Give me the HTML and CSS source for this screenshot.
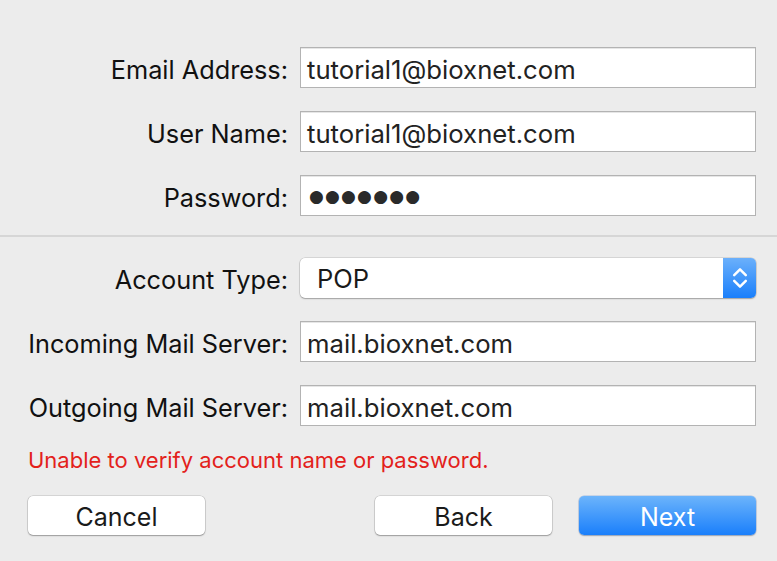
FILE: index.html
```html
<!DOCTYPE html>
<html>
<head>
<meta charset="utf-8">
<link rel="stylesheet" href="styles.css">
</head>
<body>
<div class="pane">
  <div class="section top">
    <div class="row">
      <label class="label">Email Address:</label>
      <div class="field">tutorial1@bioxnet.com</div>
    </div>
    <div class="row">
      <label class="label">User Name:</label>
      <div class="field">tutorial1@bioxnet.com</div>
    </div>
    <div class="row">
      <label class="label">Password:</label>
      <div class="field pw">●●●●●●●</div>
    </div>
  </div>
  <div class="separator"></div>
  <div class="section bottom">
    <div class="row">
      <label class="label">Account Type:</label>
      <div class="popup">
        <span class="popup-text">POP</span>
        <span class="stepper">
          <svg width="18" height="26" viewBox="0 0 18 26">
            <path d="M3.2 10.2 L9 4.4 L14.8 10.2" fill="none" stroke="#fff" stroke-width="2.5" stroke-linecap="round" stroke-linejoin="round"/>
            <path d="M3.2 15.8 L9 21.6 L14.8 15.8" fill="none" stroke="#fff" stroke-width="2.5" stroke-linecap="round" stroke-linejoin="round"/>
          </svg>
        </span>
      </div>
    </div>
    <div class="row">
      <label class="label">Incoming Mail Server:</label>
      <div class="field">mail.bioxnet.com</div>
    </div>
    <div class="row">
      <label class="label">Outgoing Mail Server:</label>
      <div class="field">mail.bioxnet.com</div>
    </div>
  </div>
  <div class="error">Unable to verify account name or password.</div>
  <div class="buttons">
    <button class="btn">Cancel</button>
    <div class="spacer"></div>
    <button class="btn">Back</button>
    <button class="btn primary">Next</button>
  </div>
</div>
</body>
</html>
```
FILE: styles.css
```css
html, body {
  margin: 0;
  padding: 0;
  background: #ececec;
}
body {
  width: 777px;
  height: 561px;
  overflow: hidden;
  font-family: "Inter", "Liberation Sans", sans-serif;
  color: #1a1a1a;
}
.pane {
  display: flex;
  flex-direction: column;
}
.section {
  display: flex;
  flex-direction: column;
  padding-right: 21px;
}
.section.top {
  padding-top: 47px;
  gap: 23px;
}
.section.bottom {
  padding-top: 21px;
  gap: 23px;
}
.separator {
  height: 2px;
  background: #d6d6d6;
  margin-top: 19px;
}
.row {
  display: flex;
  align-items: center;
  gap: 12px;
}
.label {
  width: 288px;
  text-align: right;
  font-size: 25.3px;
  line-height: 30px;
  padding-top: 4px;
  color: #111;
}
.field {
  box-sizing: border-box;
  width: 456px;
  height: 41px;
  background: #fff;
  border: 1px solid #b3b3b3;
  box-shadow: inset 0 1px 0 #e6e6e6;
  padding-left: 6px;
  padding-top: 3px;
  display: flex;
  align-items: center;
  font-size: 25.7px;
  color: #222;
}
.field.pw {
  font-family: "DejaVu Sans", sans-serif;
  font-size: 17px;
  letter-spacing: 1.2px;
  padding-left: 8px;
  padding-top: 1px;
  color: #2a2a2a;
}
.popup {
  box-sizing: border-box;
  width: 456px;
  height: 40px;
  background: #fff;
  border-radius: 5px;
  box-shadow: 0 0 0 0.5px rgba(0,0,0,0.18), 0 1px 1.5px rgba(0,0,0,0.25);
  display: flex;
  align-items: center;
  justify-content: space-between;
  overflow: hidden;
}
.popup-text {
  padding-left: 17px;
  font-size: 25.5px;
  color: #1a1a1a;
}
.stepper {
  width: 33px;
  height: 40px;
  background: linear-gradient(#6bb0fb, #1a7ffb);
  display: flex;
  align-items: center;
  justify-content: center;
}
.error {
  margin-top: 20px;
  padding-left: 28px;
  font-size: 22px;
  line-height: 28px;
  color: #e3211b;
}
.buttons {
  display: flex;
  margin-top: 22px;
  padding: 0 21px 0 28px;
  gap: 27px;
}
.spacer {
  flex: 1;
}
.btn {
  box-sizing: border-box;
  width: 177px;
  height: 39px;
  border: none;
  border-radius: 5px;
  background: #fff;
  box-shadow: 0 0 0 0.5px rgba(0,0,0,0.2), 0 1px 1.5px rgba(0,0,0,0.28);
  font-family: "Inter", "Liberation Sans", sans-serif;
  font-size: 25px;
  color: #1a1a1a;
  padding: 2px 0 0;
}
.btn.primary {
  background: linear-gradient(#6cb4fb, #1a7ffb);
  color: #fff;
  box-shadow: 0 0 0 0.5px rgba(0,80,200,0.3), 0 1px 1.5px rgba(0,0,0,0.25);
}
```
